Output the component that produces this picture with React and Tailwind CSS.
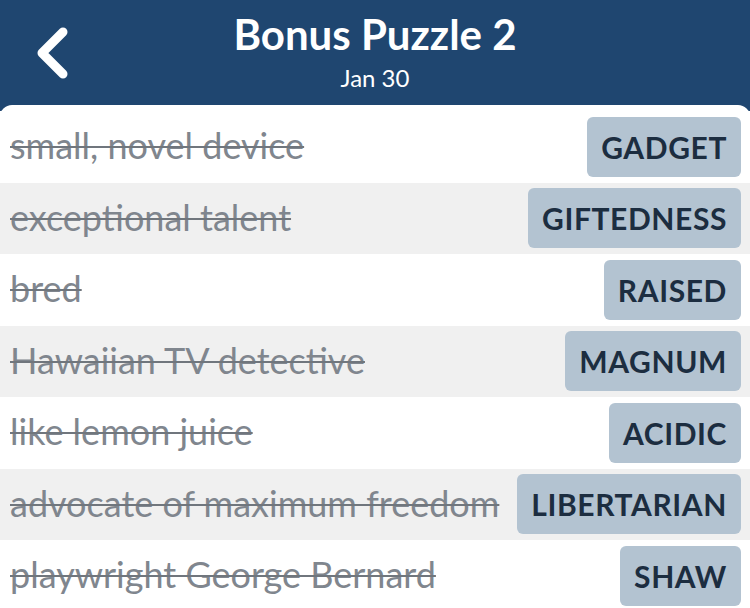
import React from "react";

const clues = [
	{clue: "small, novel device", answer: "GADGET"},
	{clue: "exceptional talent", answer: "GIFTEDNESS"},
	{clue: "bred", answer: "RAISED"},
	{clue: "Hawaiian TV detective", answer: "MAGNUM"},
	{clue: "like lemon juice", answer: "ACIDIC"},
	{clue: "advocate of maximum freedom", answer: "LIBERTARIAN"},
	{clue: "playwright George Bernard", answer: "SHAW"},
];

function ClueRow({clue, answer, shaded}) {
	return (
		<div
			className={`flex items-center justify-between h-[71.5px] pl-[10px] pr-[9px] ${shaded ? "bg-[#f0f0f0]" : "bg-white"}`}
		>
			<span className="text-[36px] leading-[44px] text-[#80868e] line-through decoration-[2px] decoration-[#70767d] whitespace-nowrap -mt-[3px]">
				{clue}
			</span>
			<div className="flex items-center h-[60px] px-[14px] rounded-md bg-[#b3c3d1]">
				<span className="text-[30px] leading-[36px] font-bold text-[#1c2d40] tracking-[0.6px]">
					{answer}
				</span>
			</div>
		</div>
	);
}

export default function App() {
	return (
		<div
			className="w-[750px] h-[608px] overflow-hidden bg-[#1f4670] flex flex-col"
			style={{fontFamily: "Lato, 'Open Sans', sans-serif"}}
		>
			{/* Header */}
			<header className="shrink-0 grid grid-cols-[1fr_auto_1fr] items-start h-[105px] px-[34px]">
				<div className="flex items-center pt-[27px]">
					<svg width="34" height="52" viewBox="0 0 34 52" fill="none">
						<path
							d="M29 5 L8 26 L29 47"
							stroke="white"
							strokeWidth="9"
							strokeLinecap="round"
							strokeLinejoin="round"
						/>
					</svg>
				</div>
				<div className="flex flex-col items-center text-white pt-[10px]">
					<h1 className="text-[42px] font-bold leading-[48px]">Bonus Puzzle 2</h1>
					<span className="text-[24px] leading-[28px] mt-[6px]">Jan 30</span>
				</div>
				<div />
			</header>

			{/* Clue list */}
			<main className="flex-1 bg-white rounded-t-xl pt-[6px]">
				{clues.map((c, i) => (
					<ClueRow key={c.answer} clue={c.clue} answer={c.answer} shaded={i % 2 === 1} />
				))}
			</main>
		</div>
	);
}
